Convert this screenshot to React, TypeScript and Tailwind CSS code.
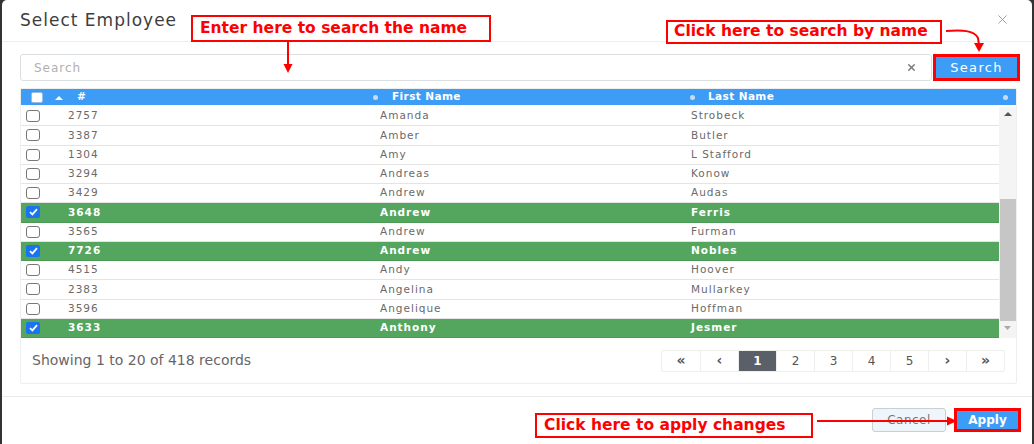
import { X } from "lucide-react";

interface Row {
    id: string;
    first: string;
    last: string;
    checked: boolean;
}

const rows: Row[] = [
    { id: "2757", first: "Amanda", last: "Strobeck", checked: false },
    { id: "3387", first: "Amber", last: "Butler", checked: false },
    { id: "1304", first: "Amy", last: "L Stafford", checked: false },
    { id: "3294", first: "Andreas", last: "Konow", checked: false },
    { id: "3429", first: "Andrew", last: "Audas", checked: false },
    { id: "3648", first: "Andrew", last: "Ferris", checked: true },
    { id: "3565", first: "Andrew", last: "Furman", checked: false },
    { id: "7726", first: "Andrew", last: "Nobles", checked: true },
    { id: "4515", first: "Andy", last: "Hoover", checked: false },
    { id: "2383", first: "Angelina", last: "Mullarkey", checked: false },
    { id: "3596", first: "Angelique", last: "Hoffman", checked: false },
    { id: "3633", first: "Anthony", last: "Jesmer", checked: true },
];

const pages = ["«", "‹", "1", "2", "3", "4", "5", "›", "»"];

function Check({ on }: { on: boolean }) {
    if (on) {
        return (
            <div className="w-[14px] h-[12px] rounded-[2px] bg-[#1a73f0] flex items-center justify-center">
                <svg width="9" height="8" viewBox="0 0 9 8" fill="none" stroke="white" strokeWidth="1.8">
                    <path d="M1 4.2 L3.4 6.4 L8 1.2" />
                </svg>
            </div>
        );
    }
    return <div className="w-[14px] h-[12px] rounded-[3px] border border-[#777] bg-white" />;
}

function Dot() {
    return <span className="inline-block w-[5px] h-[5px] rounded-full bg-[#c9dcee]" />;
}

export default function App() {
    return (
        <div className="w-[1034px] h-[444px] bg-[#333] px-[2px] overflow-hidden" style={{ fontFamily: '"DejaVu Sans", sans-serif' }}>
            <div className="relative h-full bg-white rounded-t-[5px] flex flex-col">
                {/* header */}
                <div className="h-[42px] shrink-0 border-b border-[#eceeef] flex items-center justify-between pl-[18px] pr-[22px]">
                    <h2 className="text-[17px] tracking-[1px] text-[#3d3d3d] mt-[1px]">Select Employee</h2>
                    <X size={15} strokeWidth={1.5} className="text-[#9a9a9a] -mt-[2px]" />
                </div>

                {/* body */}
                <div className="pl-[18px] pr-[12px] pt-[12px] pb-[12px] border-b border-[#e8eaeb]">
                    <div className="flex h-[27px] gap-[1px]">
                        <div className="flex-1 border border-[#dcdfe2] rounded-[3px] flex items-center justify-between pl-[13px] pr-[14px]">
                            <span className="text-[12px] tracking-[1px] text-[#b0b0b0]">Search</span>
                            <X size={11} strokeWidth={3.2} className="text-[#7a7a7a]" />
                        </div>
                        <button className="w-[87px] bg-[#3d9cf5] border-[3px] border-[#ff0000] text-white text-[13px] tracking-[1.3px] flex items-center justify-center">
                            Search
                        </button>
                    </div>

                    <div className="mt-[7px] w-[997px] border border-[#eceef0] rounded-[2px]">
                        {/* table header */}
                        <div className="h-[16px] bg-[#3d9cf5] flex items-center text-white text-[10.5px] font-bold tracking-[0.4px]">
                            <div className="w-[29px] pl-[10px] flex items-center">
                                <div className="w-[12px] h-[11px] bg-white rounded-[2px] border border-[#9bbbe0]" />
                            </div>
                            <div className="w-[320px] flex items-center pl-[5px]">
                                <svg width="8" height="5" viewBox="0 0 8 5">
                                    <path d="M0 5 L4 1 L8 5 Z" fill="white" />
                                </svg>
                                <span className="ml-[14px]">#</span>
                            </div>
                            <div className="w-[317px] flex items-center pl-[3px]">
                                <Dot />
                                <span className="ml-[14px]">First Name</span>
                            </div>
                            <div className="flex-1 flex items-center pl-[3px] pr-[8px]">
                                <Dot />
                                <span className="ml-[13px]">Last Name</span>
                                <span className="ml-auto">
                                    <Dot />
                                </span>
                            </div>
                        </div>

                        {/* rows + scrollbar */}
                        <div className="flex mt-[2px]">
                            <div className="w-[979px]">
                                {rows.map((r) => (
                                    <div
                                        key={r.id}
                                        className={`h-[19.25px] flex items-center border-b text-[10.5px] tracking-[1px] ${
                                            r.checked ? "bg-[#54a65e] border-[#4b9a55] text-white font-bold" : "bg-white border-[#e4e4e4] text-[#6a6a6a]"
                                        }`}
                                    >
                                        <div className="w-[39px] pl-[5px] flex items-center">
                                            <Check on={r.checked} />
                                        </div>
                                        <div className="w-[312px] pl-[8px]">{r.id}</div>
                                        <div className="w-[315px] pl-[8px]">{r.first}</div>
                                        <div className="flex-1 pl-[4px]">{r.last}</div>
                                    </div>
                                ))}
                            </div>
                            <div className="w-[17px] bg-[#f4f4f4] flex flex-col items-center">
                                <svg width="8" height="5" viewBox="0 0 8 5" className="mt-[4px]">
                                    <path d="M0 5 L4 1 L8 5 Z" fill="#555" />
                                </svg>
                                <div className="mt-[83px] w-[16px] h-[122px] bg-[#c6c6c6]" />
                                <svg width="7" height="4" viewBox="0 0 7 4" className="mt-[5px]">
                                    <path d="M0 0 L3.5 4 L7 0 Z" fill="#aaa" />
                                </svg>
                            </div>
                        </div>

                        {/* table footer */}
                        <div className="h-[45px] flex items-center justify-between pl-[11px] pr-[11px]">
                            <span className="text-[14px] text-[#666]">Showing 1 to 20 of 418 records</span>
                            <div className="flex h-[22px] border border-[#eeeeee] rounded-[2px]">
                                {pages.map((p, i) => (
                                    <div
                                        key={i}
                                        className={`w-[38px] flex items-center justify-center text-[12px] ${i > 0 ? "border-l border-[#eeeeee]" : ""} ${
                                            p === "1" ? "bg-[#5b6068] text-white font-bold" : "text-[#555]"
                                        } ${p === "«" || p === "»" || p === "‹" || p === "›" ? "font-bold text-[14px]" : ""}`}
                                    >
                                        {p}
                                    </div>
                                ))}
                            </div>
                        </div>
                    </div>
                </div>

                {/* footer */}
                <div className="flex justify-end items-start pt-[11px] pr-[11px] gap-[8px]">
                    <button className="w-[74px] h-[24px] bg-[#eef6fb] border border-[#c9cfd4] rounded-[3px] text-[12px] tracking-[0.5px] text-[#777]">Cancel</button>
                    <button className="w-[67px] h-[24px] bg-[#3d9cf5] border-[3px] border-[#ff0000] text-[12px] font-bold text-white">Apply</button>
                </div>

                {/* annotations */}
                <div className="absolute left-[189px] top-[15px] w-[300px] h-[27px] border-2 border-[#ff0000] bg-white flex items-center pl-[7px]">
                    <span className="text-[15.5px] font-bold text-[#ff0000] whitespace-nowrap">Enter here to search the name</span>
                </div>
                <svg className="absolute left-[279px] top-[42px]" width="14" height="32" viewBox="0 0 14 32">
                    <path d="M7 0 L7 24" stroke="#ff0000" strokeWidth="2" />
                    <path d="M2.5 22 L7 31 L11.5 22 Z" fill="#ff0000" />
                </svg>

                <div className="absolute left-[664px] top-[20px] w-[276px] h-[24px] border-2 border-[#ff0000] bg-white flex items-center pl-[6px]">
                    <span className="text-[15.5px] font-bold text-[#ff0000] whitespace-nowrap">Click here to search by name</span>
                </div>
                <svg className="absolute left-[942px] top-[26px]" width="44" height="28" viewBox="0 0 44 28">
                    <path d="M2 5 C18 4 30 4 34 12 L35 19" stroke="#ff0000" strokeWidth="2" fill="none" />
                    <path d="M30 17 L35 26 L40 17 Z" fill="#ff0000" />
                </svg>

                <div className="absolute left-[533px] top-[413px] w-[278px] h-[25px] border-2 border-[#ff0000] bg-white flex items-center pl-[7px]">
                    <span className="text-[15.5px] font-bold text-[#ff0000] whitespace-nowrap">Click here to apply changes</span>
                </div>
                <svg className="absolute left-[815px] top-[415px]" width="142" height="12" viewBox="0 0 142 12">
                    <path d="M0 6 L132 6" stroke="#ff0000" strokeWidth="2" />
                    <path d="M130 1.5 L140 6 L130 10.5 Z" fill="#ff0000" />
                </svg>
            </div>
        </div>
    );
}
